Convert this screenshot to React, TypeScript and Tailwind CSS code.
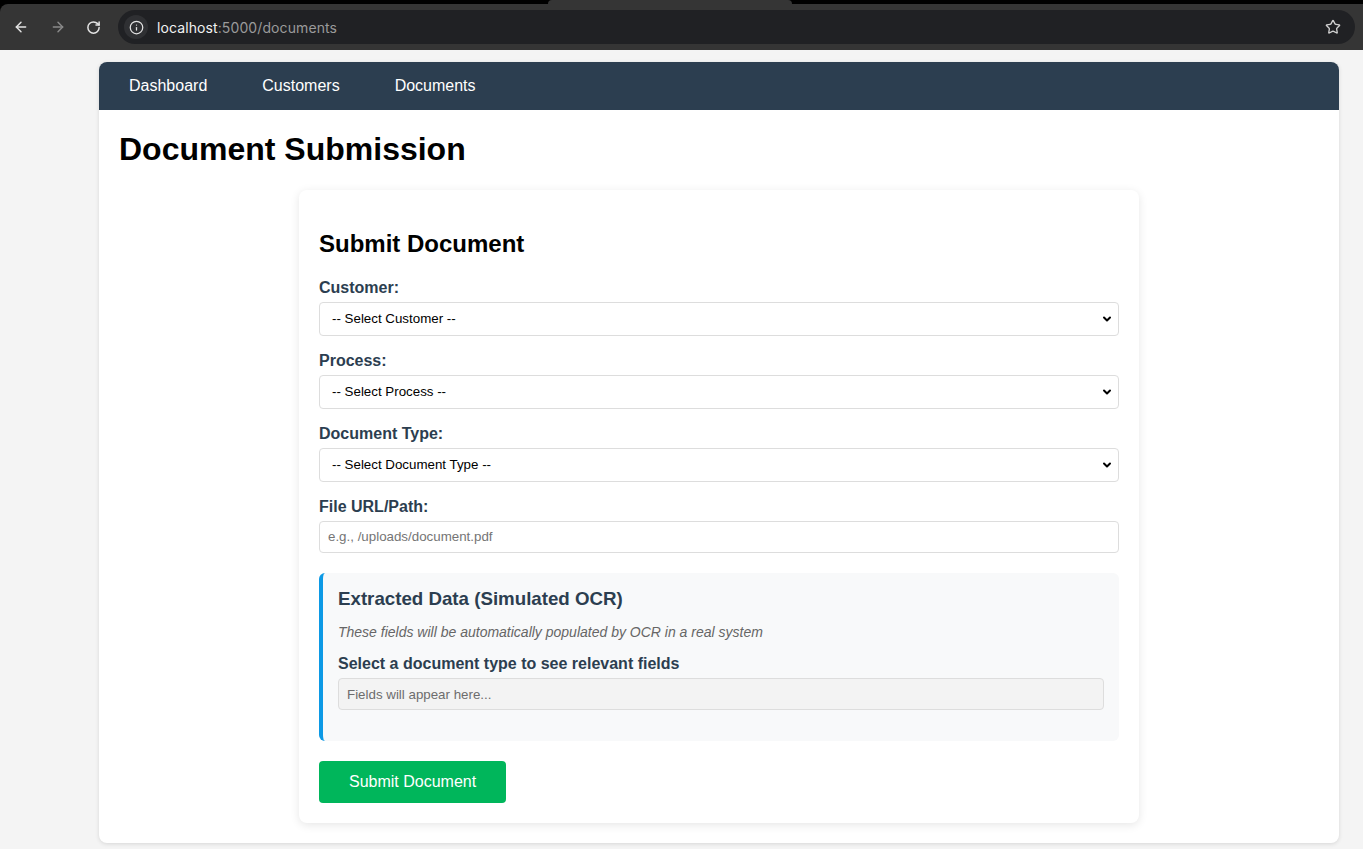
import { ArrowLeft, ArrowRight, RotateCw, Info, Star, ChevronDown } from 'lucide-react';

const font = { fontFamily: '"Liberation Sans", Arial, sans-serif' };

function BrowserBar() {
  return (
    <div className="bg-black">
      {/* tab strip edge */}
      <div className="flex h-[4px]">
        <div className="w-[548px]" />
        <div className="w-[244px] rounded-t-[6px] bg-[#353535]" />
      </div>
      <div className="flex h-[46px] items-center rounded-tl-[8px] bg-[#353535] pr-[8px]">
        <div className="flex w-[118px] items-center pl-[13px] text-[#e3e3e3]">
          <ArrowLeft className="h-[16px] w-[16px]" strokeWidth={2.2} />
          <ArrowRight className="ml-[21px] h-[16px] w-[16px] text-[#8a8a8a]" strokeWidth={2.2} />
          <RotateCw className="ml-[20px] h-[15px] w-[15px]" strokeWidth={2.4} />
        </div>
        <div className="flex h-[34px] flex-1 items-center rounded-full bg-[#202124] pl-[6px] pr-[14px]">
          <div className="flex h-[24px] w-[24px] items-center justify-center rounded-full bg-[#2f3033]">
            <Info className="h-[15px] w-[15px] text-[#e3e3e3]" strokeWidth={2} />
          </div>
          <div className="ml-[9px] flex-1 text-[14px] tracking-[0.1px]" style={{ fontFamily: 'Inter, "Liberation Sans", sans-serif' }}>
            <span className="text-[#f1f1f1]">localhost</span>
            <span className="text-[#9a9a9a]">:5000/documents</span>
          </div>
          <Star className="h-[16px] w-[16px] text-[#d0d0d0]" strokeWidth={2} />
        </div>
      </div>
    </div>
  );
}

function SelectField({ label, placeholder }: { label: string; placeholder: string }) {
  return (
    <div className="mb-[15px]">
      <label className="mb-[5px] block text-[16px] font-bold leading-[19px] text-[#2c3e50]">{label}</label>
      <div className="relative">
        <select
          className="block h-[34px] w-full appearance-none rounded-[4px] border border-[#dddddd] bg-white pl-[12px] text-[13.33px] text-black outline-none"
          defaultValue=""
        >
          <option value="">{placeholder}</option>
        </select>
        <ChevronDown
          className="pointer-events-none absolute right-[6px] top-[11px] h-[12px] w-[12px] text-black"
          strokeWidth={4}
        />
      </div>
    </div>
  );
}

export default function App() {
  return (
    <div className="min-h-screen bg-[#f4f4f4]" style={font}>
      <BrowserBar />

      <div className="ml-[99px] mt-[12px] w-[1240px] overflow-hidden rounded-[8px] bg-white pb-[20px] shadow-[0_1px_4px_rgba(0,0,0,0.12)]">
        {/* Nav */}
        <nav className="flex h-[48px] items-center gap-[55px] bg-[#2c3e50] px-[30px] text-[16px] text-white">
          <span>Dashboard</span>
          <span>Customers</span>
          <span>Documents</span>
        </nav>

        <div className="px-[20px]">
          <h1 className="mb-[22px] mt-[21px] text-[32px] font-bold leading-[37px] text-black">Document Submission</h1>

          {/* Card */}
          <div className="mx-auto w-[840px] rounded-[8px] bg-white p-[20px] shadow-[0_2px_10px_rgba(0,0,0,0.1)]">
            <h2 className="mb-[20px] mt-[20px] text-[24px] font-bold leading-[27.6px] text-black">Submit Document</h2>

            <SelectField label="Customer:" placeholder="-- Select Customer --" />
            <SelectField label="Process:" placeholder="-- Select Process --" />
            <SelectField label="Document Type:" placeholder="-- Select Document Type --" />

            <div>
              <label className="mb-[5px] block text-[16px] font-bold leading-[19px] text-[#2c3e50]">File URL/Path:</label>
              <input
                type="text"
                placeholder="e.g., /uploads/document.pdf"
                className="block h-[32px] w-full rounded-[4px] border border-[#dddddd] bg-white px-[8px] text-[13.33px] text-black outline-none placeholder:text-[#757575]"
              />
            </div>

            {/* Extracted data */}
            <div className="mt-[20px] rounded-[6px] border-l-4 border-[#0c99e5] bg-[#f8f9fa] p-[15px]">
              <h3 className="text-[18.72px] font-bold leading-[21.5px] text-[#2c3e50]">Extracted Data (Simulated OCR)</h3>
              <p className="mb-[14px] mt-[15px] text-[14px] italic leading-[16px] text-[#666666]">
                These fields will be automatically populated by OCR in a real system
              </p>
              <div className="mb-[16px]">
                <label className="mb-[5px] block text-[16px] font-bold leading-[19px] text-[#2c3e50]">
                  Select a document type to see relevant fields
                </label>
                <input
                  type="text"
                  disabled
                  placeholder="Fields will appear here..."
                  className="block h-[32px] w-full rounded-[4px] border border-[#dddddd] bg-[#f3f3f3] px-[8px] text-[13.33px] outline-none placeholder:text-[#6d6d6d]"
                />
              </div>
            </div>

            <button className="mt-[20px] h-[42px] rounded-[4px] bg-[#00b65b] px-[30px] text-[16px] text-white">
              Submit Document
            </button>
          </div>
        </div>
      </div>
    </div>
  );
}
